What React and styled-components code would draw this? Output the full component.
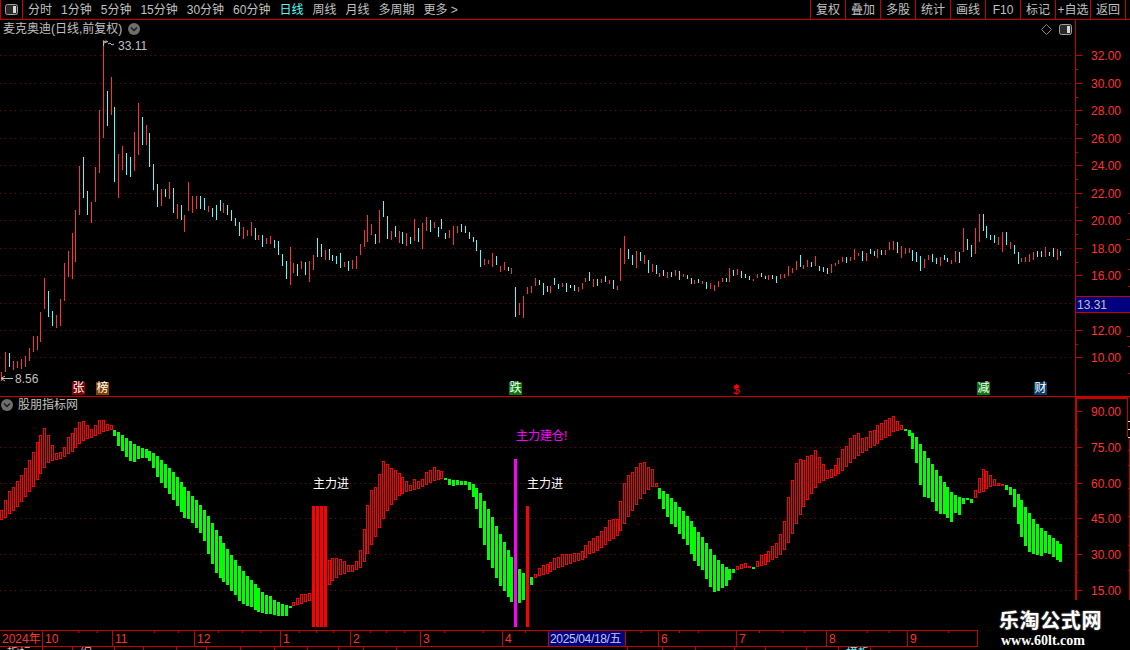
import React from "react";
import styled, { createGlobalStyle } from "styled-components";

const RED = "#c80000";
const FONT = '"Liberation Sans", "Noto Sans CJK SC", sans-serif';

const Global = createGlobalStyle`
  html, body { margin: 0; padding: 0; background: #000; }
  #root { width: 1130px; height: 650px; }
`;

/* ---------- data: colour + top-bottom, one per trading day ---------- */
const CANDLES = `r372-381 r352-372 c353-367 r361-370 r361-368 r359-369 r356-367 r348-361 r336-352 r336-350
r312-342 r278-309 c291-317 c311-326 r315-328 r299-326 r263-301 r251-277 r233-279 r210-262
r166-215 c157-198 c191-215 r202-223 r167-202 r110-173 r40-138 c91-126 r77-115 c107-182
r154-198 r146-170 c153-175 c157-177 r132-171 r103-155 c117-145 r125-145 c133-167 c164-190
c184-207 r189-206 c189-197 r182-199 c188-213 r204-219 c205-220 r215-232 r182-211 r196-213
r196-209 c196-209 c198-210 r206-212 c208-217 c205-220 c200-211 r203-213 c205-215 c210-221
c218-226 c222-236 r227-239 r230-236 r222-236 c228-240 r235-240 c235-247 r238-244 r236-244
c240-248 c241-255 c254-266 c261-279 r247-285 r263-273 c264-276 r261-269 c262-275 r261-282
r255-270 c238-257 c244-257 r250-260 c249-260 c255-261 c256-264 c253-268 r262-267 c261-271
r260-269 r256-269 r244-255 r230-247 r215-242 r224-235 c234-244 r210-243
c201-217 c216-239 r231-240 c226-237 r231-243 c232-244 r233-246 c237-244 r219-241 c228-242
r223-249 r217-231 c220-232 r222-228 c227-237 c219-229 c233-239 r230-238 r226-245 r226-233
c224-232 c226-233 c232-239 c237-242 c240-251 c250-267 r259-265 r260-264 r253-267 c256-265
r266-272 r262-270 c267-271 r268-274 c287-317 r303-315 r296-318 r287-294 r286-293 r278-286
c280-285 c283-295 c286-292 r286-293 c278-285 c284-289 r283-287 c283-292 w285-288 c285-291
r287-292 r283-289 r278-282 c272-281 r279-287 c279-286 r279-283 c276-282 r280-284 c280-289
r286-290 r248-281 r236-264 c249-259 c255-265 r251-268 c252-261 r255-264 c260-273 r264-272
c265-274 r273-277 c270-276 r272-278 c272-277 r270-276 c271-280 r274-277 c275-279 c278-284
r280-284 c279-283 r281-284 c282-289 r283-289 r285-291 r281-287 r278-282 c278-282 r268-282
c270-276 r269-275 c271-278 c274-278 c276-280 r279-281 r274-278
c273-277 c276-279 r275-280 c275-279 c276-283 r274-279 r274-278 r266-276 r268-273 r261-270
c255-267 r265-269 r260-267 c262-267 r256-266 c266-271 c267-272 c268-274 r264-273 r263-266
r260-264 r257-262 c257-263 r257-261 r249-260 r253-256 c251-261 r253-261 c249-254 c251-256
r249-258 c250-255 r250-255 r242-250 r241-250 c242-253 r246-258 r248-254 r248-253 c250-261
c252-262 c256-271 r259-268 r255-260 c254-262 c258-264 r257-266 c255-260 c258-262 r260-264
r251-262 c252-263 r228-252 c239-250 c245-257 r228-254 r214-242 c214-231 c226-238 c235-240
c235-243 r237-245 r232-252 c232-245 r242-249 c245-254 c252-264 r258-262 r257-262 r254-262
r252-260 c251-257 c251-257 r247-257 c252-256 c248-257 r249-260 c251-256`;

const BARS = `h510-520 h500-518 h491-514 h487-511 h481-507 h475-502 h468-497 h460-492 h452-487 h442-480
h435-474 h428-468 h435-463 h445-461 h453-460 h452-459 h447-457 h437-454 h433-452 h428-448
h422-444 h421-441 h425-439 h429-438 h425-436 h420-434 h420-432 h424-431 h425-430
g430-436 g432-446 g435-451 g438-457 g441-461 g444-462 g446-459 g448-458 g449-458 g451-461
g453-468 g456-477 g460-483 g464-488 g468-494 g472-500 g477-506 g482-512 g487-518 g491-519
g496-523 g500-528 g505-533 g510-541 g516-554 g523-564 g530-573 g536-578 g543-582 g549-585
g555-591 g560-595 g566-601 g571-604 g576-606 g580-607 g584-610 g588-612 g592-613 g595-614
g596-614 g600-615 g602-616 g604-616 g605-616 g606-608
h602-606 h598-605 h594-604 h594-602 h593-601
s506-627 s506-627 s506-627 s506-627
h560-585 h558-581 h558-578 h559-575 h561-574 h565-572 h565-572 h561-570 h550-568 h529-562
h505-554 h490-545 h487-537 h474-528
h461-519 h464-511 h468-505 h470-500 h473-496 h477-494 h481-492 h485-491 h479-490 h481-489
h479-487 h472-485 h470-483 h467-481 h470-480 h471-479
g478-480 g479-485 g480-486 g480-485 g481-485 g481-485 g482-490 g484-497 g488-509 g493-528
g501-545 g509-560 g517-568 g526-578 g534-586 g542-591 g550-597 g557-602
m459-627 g569-603 g573-600 s506-627 g577-585
h574-578 h568-576 h565-575 h564-574 h562-572 h558-570 h557-568 h554-567 h554-565 h554-564
h553-562 h553-561 h551-560 h545-558 h541-554 h538-553 h536-551 h531-548 h527-545 h520-541
h519-539 h519-536 h501-531 h483-524 h475-517 h472-511 h467-505 h463-499 h462-494 h467-490
h469-487 h483-487
g488-499 g491-509 g494-517 g498-524 g502-527 g507-534 g511-539 g516-545 g521-554 g527-561
g532-566 g537-570 g543-579 g549-587 g555-592 g560-591 g564-588 g567-586 g569-580 g569-573
h566-570 h564-569 h563-568 s566-568 g567-569 h561-567
h555-566 h554-565 h551-562 h546-560 h543-558 h534-555 h521-550 h497-543 h480-534 h463-524
h459-515 h460-507 h456-500 h455-494 h450-488 h457-483 h464-481 h470-479 h469-478 h465-476
h458-474 h449-471 h446-467 h438-463 h435-459 h433-456 h438-453 h437-451 h431-448 h430-446
h425-444 h423-440 h420-438 h418-436 h416-432 h421-431 h425-430
g429-431 g430-436 g433-449 g437-463 g444-485 g451-497 g458-498 g464-502 g470-511 g476-514
g482-514 g487-518 g492-522 g495-513 g497-515 g498-504 g498-500 g499-503
h490-498 h478-493 h469-492 h471-489 h475-487 h479-486 h483-486 h484-486
g485-490 g487-495 g489-507 g494-524 g500-537 g507-546 g513-552 g519-554 g524-555 g528-556
g531-553 g535-554 g538-557 g541-560 g544-562`;

const parse = (s) =>
  s.trim().split(/\s+/).map((t) => {
    const [a, b] = t.slice(1).split("-").map(Number);
    return { kind: t[0], top: a, bottom: b };
  });

const xOf = (i) => 1 + Math.ceil(i * 3.893);
const CANDLE_COLOR = { r: "#ff3232", c: "#54fcfc", w: "#ffffff" };
const BAR_COLOR = { g: "#00ff00", s: "#ff0000", m: "#ff00ff" };

const PRICE_GRID = [55, 83, 110, 138, 165, 193, 220, 248, 275, 303, 330, 357];
const PRICE_LABELS = [
  [55, "32.00"], [83, "30.00"], [110, "28.00"], [138, "26.00"], [165, "24.00"], [193, "22.00"],
  [220, "20.00"], [248, "18.00"], [275, "16.00"], [330, "12.00"], [357, "10.00"],
];
const IND_GRID = [447, 483, 518, 554, 590];
const IND_LABELS = [
  [411, "90.00"], [447, "75.00"], [483, "60.00"], [518, "45.00"], [554, "30.00"], [590, "15.00"],
];
const TOOLS_LEFT = ["分时", "1分钟", "5分钟", "15分钟", "30分钟", "60分钟", "日线", "周线", "月线", "多周期", "更多 >"];
const TOOLS_RIGHT = ["复权", "叠加", "多股", "统计", "画线", "F10", "标记", "+自选", "返回"];
const TIME_CELLS = [
  [43, "2024年"], [70, "10"], [82, "11"], [86, "12"], [70, "1"], [70, "2"], [82, "3"], [46, "4"],
  [77, "2025/04/18/五", true], [33, ""], [78, "6"], [90, "7"], [81, "8"], [70, "9"],
];
const TIME_TICKS = [78, 97, 154, 178, 218, 242, 260, 299, 316, 333, 370, 386, 404, 444, 483, 525, 641, 679, 698, 759, 782, 804, 867, 889, 948];
const TAB_CELLS = [
  [43, "指标"], [30, ""], [42, "编"], [29, ""], [33, ""], [30, ""], [34, ""], [34, ""], [33, ""], [31, ""], [25, ""],
  [33, ""], [231, ""], [35, ""], [33, ""], [39, ""], [31, ""], [41, ""], [32, "·"], [32, "模板"], [122, ""],
];

/* ---------- styled parts ---------- */
const Page = styled.div`
  position: relative;
  width: 1130px;
  height: 650px;
  overflow: hidden;
  background: #000;
  color: #c0c0c0;
  font: 12px/1 ${FONT};
  display: flex;
  flex-direction: column;
`;
const Toolbar = styled.div`
  flex: none;
  height: 19px;
  display: flex;
  align-items: center;
  border-bottom: 1px solid ${RED};
`;
const LayoutButton = styled.div`
  flex: none;
  width: 23px;
  height: 19px;
  box-sizing: border-box;
  border-left: 1px solid ${RED};
  border-right: 1px solid ${RED};
  display: flex;
  align-items: center;
  justify-content: center;
`;
const ToolList = styled.div`
  display: flex;
  gap: 9px;
  margin-left: 5px;
  flex: 1;
`;
const Tool = styled.span`
  color: ${(p) => (p.$active ? "#54fcfc" : "#c0c0c0")};
  white-space: nowrap;
`;
const ActionGroup = styled.div`
  display: flex;
  height: 19px;
  margin-right: 4px;
  border-right: 1px solid ${RED};
`;
const Action = styled.div`
  width: 35px;
  box-sizing: border-box;
  border-left: 1px solid ${RED};
  display: flex;
  align-items: center;
  justify-content: center;
  white-space: nowrap;
`;
const PricePane = styled.div`
  flex: none;
  height: 376px;
  display: flex;
  border-bottom: 1px solid ${RED};
`;
const IndicatorPane = styled.div`
  flex: none;
  height: 233px;
  display: flex;
`;
const PlotColumn = styled.div`
  width: 1075px;
  flex: none;
  display: flex;
  flex-direction: column;
`;
const PaneTitle = styled.div`
  flex: none;
  height: ${(p) => p.$h}px;
  display: flex;
  align-items: center;
  gap: ${(p) => p.$gap}px;
  padding: 0 6px 0 ${(p) => p.$pad}px;
  white-space: nowrap;
`;
const TitleIcons = styled.div`
  margin-left: auto;
  display: flex;
  align-items: center;
  gap: 7px;
  margin-right: -3px;
`;
const Plot = styled.svg`
  display: block;
  flex: none;
  shape-rendering: crispEdges;
`;
const AxisBox = styled.div`
  position: relative;
  flex: none;
  width: 55px;
`;
const AxisSvg = styled.svg`
  display: block;
  shape-rendering: crispEdges;
`;
const AxisText = styled.text`
  fill: #ff3232;
  font: 12px ${FONT};
`;
const PriceTag = styled.div`
  position: absolute;
  left: 1px;
  top: 276px;
  width: 54px;
  height: 17px;
  box-sizing: border-box;
  border-top: 1px solid ${RED};
  border-bottom: 1px solid ${RED};
  background: #000080;
  color: #c0c0c0;
  display: flex;
  align-items: center;
  padding-left: 1px;
`;
const NoteText = styled.text`
  fill: ${(p) => p.$color || "#c0c0c0"};
  font: 12px ${FONT};
  shape-rendering: auto;
`;
const Badge = styled.span`
  position: absolute;
  left: ${(p) => p.$x}px;
  top: 382px;
  width: 13px;
  height: 13px;
  background: ${(p) => p.$bg};
  color: #fff;
  font-size: 12px;
  line-height: 13px;
  text-align: center;
`;
const TimeAxis = styled.div`
  position: relative;
  flex: none;
  width: 978px;
  height: 15px;
  display: flex;
  border-top: 1px solid ${RED};
  border-bottom: 1px solid ${RED};
`;
const TimeCell = styled.div`
  flex: none;
  box-sizing: border-box;
  width: ${(p) => p.$w}px;
  padding-left: ${(p) => (p.$selected ? 1 : 2)}px;
  border-right: 1px solid ${RED};
  background: ${(p) => (p.$selected ? "#000080" : "transparent")};
  color: ${(p) => (p.$selected ? "#c0c8e8" : "#ff3232")};
  display: flex;
  align-items: center;
  white-space: nowrap;
  letter-spacing: ${(p) => (p.$selected ? "-0.35px" : "0")};
`;
const TickLayer = styled.svg`
  position: absolute;
  left: 0;
  top: 0;
  shape-rendering: crispEdges;
`;
const TabRow = styled.div`
  flex: none;
  height: 3px;
  display: flex;
  overflow: hidden;
`;
const Tab = styled.div`
  flex: none;
  box-sizing: border-box;
  width: ${(p) => p.$w}px;
  height: 16px;
  padding: 0 0 0 7px;
  border-right: 1px solid ${RED};
  color: ${(p) => (p.$cyan ? "#54fcfc" : "#c0c0c0")};
  white-space: nowrap;
  overflow: hidden;
`;
const Watermark = styled.div`
  position: absolute;
  left: 978px;
  top: 600px;
  width: 152px;
  height: 50px;
  background: #000;
  color: #fff;
  display: flex;
  flex-direction: column;
  align-items: flex-start;
  padding: 8px 0 0 21px;
  box-sizing: border-box;
`;
const WatermarkName = styled.div`
  font: 700 20px/24px "Noto Sans CJK SC", sans-serif;
  letter-spacing: 0.6px;
  text-shadow: 0 0 2px #9a9a9a;
`;
const WatermarkUrl = styled.div`
  font: 700 14px/14px "Liberation Serif", serif;
  margin: 2px 0 0 2px;
`;

/* ---------- drawings ---------- */
const SplitIcon = () => (
  <svg width="13" height="11" viewBox="0 0 13 11">
    <rect x="0.5" y="0.5" width="12" height="10" rx="2" fill="#2a2a2a" stroke="#a0a0a0" />
    <rect x="8" y="2" width="3" height="7" fill="#d8d8d8" />
  </svg>
);
const ChevronCircle = () => (
  <svg width="12" height="12" viewBox="0 0 12 12">
    <circle cx="6" cy="6" r="6" fill="#6e6e6e" />
    <path d="M3 4.5 L6 7.5 L9 4.5" fill="none" stroke="#1a1a1a" strokeWidth="1.4" />
  </svg>
);
const Diamond = () => (
  <svg width="11" height="11" viewBox="0 0 11 11">
    <path d="M5.5 0.5 L10.5 5.5 L5.5 10.5 L0.5 5.5 Z" fill="none" stroke="#8a8a8a" />
  </svg>
);

const Grid = ({ ys }) =>
  ys.map((y) => (
    <line key={y} x1="0" x2="1075" y1={y + 0.5} y2={y + 0.5} stroke="#800000" strokeDasharray="1 4" />
  ));

const Candles = () =>
  parse(CANDLES).map((c, i) => (
    <rect key={i} x={xOf(i)} y={c.top} width="1" height={c.bottom - c.top} fill={CANDLE_COLOR[c.kind]} />
  ));

const Bars = () =>
  parse(BARS).map((b, i) =>
    b.kind === "h" ? (
      <rect key={i} x={xOf(i) - 0.5} y={b.top + 0.5} width="2" height={b.bottom - b.top - 1} fill="#000" stroke="#ff0000" />
    ) : (
      <rect
        key={i}
        x={xOf(i) - 1}
        y={b.top}
        width="3"
        height={b.bottom - b.top}
        fill={BAR_COLOR[b.kind]}
      />
    )
  );

const Axis = ({ top, height, labels, thick }) => (
  <AxisSvg width="55" height={height} viewBox={`1075 ${top} 55 ${height}`}>
    <rect x="1075" y={top} width={thick ? 2 : 1} height={height} fill={RED} />
    {labels.map(([y, text], i) => (
      <g key={text}>
        <rect x="1075" y={y} width="7" height="1" fill={RED} />
        {i > 0 && <rect x="1075" y={Math.round((y + labels[i - 1][0]) / 2)} width="3" height="1" fill={RED} />}
        <AxisText x="1091" y={y + 5}>{text}</AxisText>
      </g>
    ))}
    {thick ? (
      <>
        <rect x="1075" y={top} width="52" height="2" fill={RED} />
        <rect x="1127" y={top} width="1" height="40" fill={RED} />
        <rect x="1129" y={top + 40} width="1" height="170" fill={RED} />
        {[421, 429, 437].map((y) => <rect key={y} x="1128" y={y} width="2" height="1" fill="#e0e0e0" />)}
        {[450, 465, 488, 516, 545, 570].map((y) => <rect key={y} x="1128" y={y} width="2" height="1" fill={RED} />)}
      </>
    ) : (
      [213, 239, 269, 286, 336, 346, 373].map((y) => (
        <rect key={y} x={y === 239 || y === 336 ? 1127 : 1128} y={y} width="3" height="1" fill={RED} />
      ))
    )}
  </AxisSvg>
);

export default function App() {
  return (
    <Page>
      <Global />
      <Toolbar>
        <LayoutButton><SplitIcon /></LayoutButton>
        <ToolList>
          {TOOLS_LEFT.map((t) => <Tool key={t} $active={t === "日线"}>{t}</Tool>)}
        </ToolList>
        <ActionGroup>
          {TOOLS_RIGHT.map((t) => <Action key={t}>{t}</Action>)}
        </ActionGroup>
      </Toolbar>

      <PricePane>
        <PlotColumn>
          <PaneTitle $h={18} $pad={3} $gap={6}>
            麦克奥迪(日线,前复权)
            <ChevronCircle />
            <TitleIcons><Diamond /><SplitIcon /></TitleIcons>
          </PaneTitle>
          <Plot width="1075" height="358" viewBox="0 38 1075 358">
            <Grid ys={PRICE_GRID} />
            <Candles />
            <path d="M103.5 46 V41.5 L107 41 M104 43 L108 41.5 M108 44 L110 43 L112 45 L114 44" fill="none" stroke="#c0c0c0" shapeRendering="auto" />
            <NoteText x="118" y="50">33.11</NoteText>
            <path d="M1 378.5 H13 M1 378.5 L5 376 M1 378.5 L5 381" fill="none" stroke="#c0c0c0" shapeRendering="auto" />
            <NoteText x="15" y="383">8.56</NoteText>
            <path d="M736.5 384 L739.5 388 H733.5 Z" fill="#ff0000" />
            <NoteText x="733" y="394" $color="#ff0000">$</NoteText>
          </Plot>
          <Badge $x={72} $bg="#800000">张</Badge>
          <Badge $x={96} $bg="#804000">榜</Badge>
          <Badge $x={509} $bg="#087808">跌</Badge>
          <Badge $x={977} $bg="#087808">减</Badge>
          <Badge $x={1034} $bg="#0a3c70">财</Badge>
        </PlotColumn>
        <AxisBox>
          <Axis top={20} height={376} labels={PRICE_LABELS} />
          <PriceTag>13.31</PriceTag>
        </AxisBox>
      </PricePane>

      <IndicatorPane>
        <PlotColumn>
          <PaneTitle $h={16} $pad={1} $gap={5}>
            <ChevronCircle />
            股朋指标网
          </PaneTitle>
          <Plot width="1075" height="217" viewBox="0 413 1075 217">
            <Grid ys={IND_GRID} />
            <Bars />
            <NoteText x="313" y="488" $color="#ffffff">主力进</NoteText>
            <NoteText x="527" y="488" $color="#ffffff">主力进</NoteText>
            <NoteText x="516" y="440" $color="#ff00ff">主力建仓!</NoteText>
          </Plot>
        </PlotColumn>
        <AxisBox>
          <Axis top={397} height={233} labels={IND_LABELS} thick />
        </AxisBox>
      </IndicatorPane>

      <TimeAxis>
        {TIME_CELLS.map(([w, text, selected], i) => (
          <TimeCell key={i} $w={w} $selected={selected}>{text}</TimeCell>
        ))}
        <TickLayer width="978" height="3" viewBox="0 0 978 3">
          {TIME_TICKS.map((x) => <rect key={x} x={x} y="0" width="1" height="2" fill={RED} />)}
        </TickLayer>
      </TimeAxis>
      <TabRow>
        {TAB_CELLS.map(([w, text], i) => (
          <Tab key={i} $w={w} $cyan={text === "模板"}>{text}</Tab>
        ))}
      </TabRow>

      <Watermark>
        <WatermarkName>乐淘公式网</WatermarkName>
        <WatermarkUrl>www.60lt.com</WatermarkUrl>
      </Watermark>
    </Page>
  );
}
